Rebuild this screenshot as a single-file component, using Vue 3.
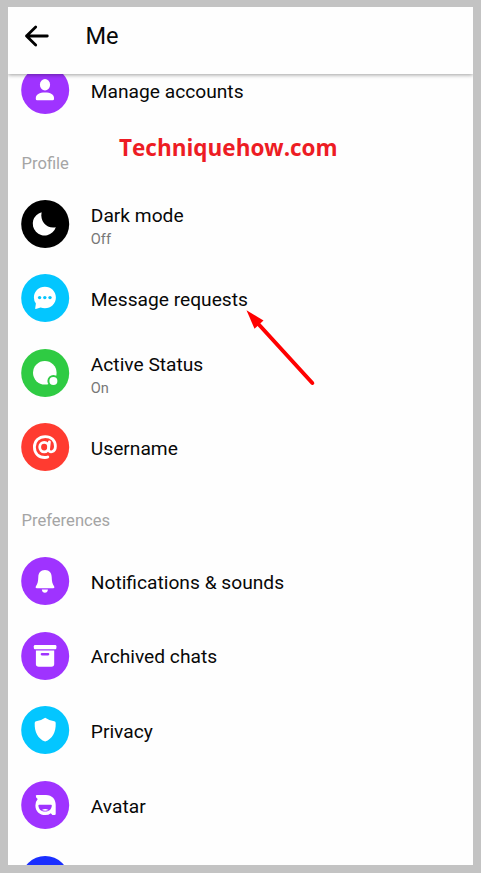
<script setup>
const sections = [
  { title: '', items: [{ label: 'Manage accounts', icon: 'person', tone: 'purple' }] },
  {
    title: 'Profile',
    items: [
      { label: 'Dark mode', sub: 'Off', icon: 'moon', tone: 'black' },
      { label: 'Message requests', icon: 'chat', tone: 'cyan' },
      { label: 'Active Status', sub: 'On', icon: 'active', tone: 'green' },
      { label: 'Username', icon: 'at', tone: 'red' },
    ],
  },
  {
    title: 'Preferences',
    items: [
      { label: 'Notifications & sounds', icon: 'bell', tone: 'purple' },
      { label: 'Archived chats', icon: 'archive', tone: 'purple' },
      { label: 'Privacy', icon: 'shield', tone: 'cyan' },
      { label: 'Avatar', icon: 'avatar', tone: 'purple' },
      { label: '', icon: 'none', tone: 'blue' },
    ],
  },
]
</script>

<template>
  <div class="frame">
    <main class="screen">
      <header class="bar">
        <svg class="back" viewBox="0 0 26 24" aria-label="Back">
          <path d="M23.3 12H2.5M11.7 3L2.5 12L11.7 21" />
        </svg>
        <h1>Me</h1>
      </header>
      <div class="list">
        <section v-for="section in sections" :key="section.title">
          <h2 v-if="section.title">{{ section.title }}</h2>
          <div v-for="item in section.items" :key="item.icon" class="row">
            <svg class="icon" :class="item.tone" viewBox="0 0 48 48">
              <circle class="disc" cx="24.2" cy="24" r="24" />
              <g v-if="item.icon === 'person'">
                <ellipse cx="24" cy="18.7" rx="5.1" ry="5.7" />
                <path d="M14.8 33V32.3C14.8 28.5 18.5 26.6 24 26.6S33 28.5 33 32.3V33Q33 34.3 31.7 34.3H16.1Q14.8 34.3 14.8 33Z" />
              </g>
              <path v-else-if="item.icon === 'moon'" d="M20.6 12.2A11.8 11.8 0 1 0 34.8 27.2C26.8 29.2 18.6 22 20.6 12.2Z" />
              <g v-else-if="item.icon === 'chat'">
                <path d="M23.9 12.7C30 12.7 34.9 17.4 34.9 23.5S30 34.2 23.9 34.2Q21.6 34.2 19.6 33.4L14.8 35Q14 35.1 14.2 34.2L14.9 29.6Q12.9 27 12.9 23.5C12.9 17.4 17.8 12.7 23.9 12.7Z" />
                <g class="disc">
                  <circle cx="18.6" cy="23.6" r="1.7" />
                  <circle cx="23.8" cy="23.6" r="1.7" />
                  <circle cx="29" cy="23.6" r="1.7" />
                </g>
              </g>
              <g v-else-if="item.icon === 'active'">
                <circle cx="23.8" cy="23.8" r="11.8" />
                <circle class="disc" cx="32.4" cy="32" r="6" />
                <circle cx="32.4" cy="32" r="4" />
              </g>
              <g v-else-if="item.icon === 'at'" class="stroked">
                <ellipse cx="23.2" cy="24.1" rx="4.5" ry="4.8" />
                <path d="M28.4 18.8L27.6 26.1C27.3 30.4 34.4 29.8 34.4 23.3C34.4 17.4 30.3 13.6 24.3 13.6C17.8 13.6 13.4 18 13.4 24.1C13.4 30.5 17.7 34.5 23.8 34.5Q25.8 34.5 26.8 34" />
              </g>
              <g v-else-if="item.icon === 'bell'">
                <path d="M24 13C28.5 13 30.6 16 30.7 20C30.8 24.5 31.4 27 33.2 29.5Q34 31.2 32.3 31.2H15.7Q14 31.2 14.8 29.5C16.6 27 17.2 24.5 17.3 20C17.4 16 19.5 13 24 13Z" />
                <path d="M20.8 32.5H26.9Q26.5 35.7 23.9 35.7T20.8 32.5Z" />
              </g>
              <g v-else-if="item.icon === 'archive'">
                <rect x="12.8" y="13" width="22.6" height="4.2" rx="1.2" />
                <path d="M14.9 18.4H33.2V32Q33.2 34.8 30.4 34.8H17.7Q14.9 34.8 14.9 32Z" />
                <rect class="disc" x="19.7" y="21" width="8.6" height="2.4" rx="1.1" />
              </g>
              <path v-else-if="item.icon === 'shield'" d="M24.2 11.8Q28.4 14.8 33.2 15.2Q34.7 15.3 34.7 16.9C35 26.5 31.4 32.6 24.2 35.6C17 32.6 13.4 26.5 13.7 16.9Q13.7 15.3 15.2 15.2Q20 14.8 24.2 11.8Z" />
              <g v-else-if="item.icon === 'avatar'">
                <path d="M14.8 14.5Q15.2 13.9 16.2 14L25 14C31 14.1 34.7 18.2 34.7 24V33Q34.7 34.1 33.5 34.1H31.4L29.8 32.2Q27.6 34.1 24.4 34.1C18.4 34.1 14.4 30.2 14.4 24.5Q14.4 20.7 16.7 18Q14.6 16.7 14.8 14.5Z" />
                <path class="disc" d="M18.2 23.8H30Q31 23.8 30.8 24.9C30.2 28.5 27.6 30.6 24.1 30.6S18 28.5 17.4 24.9Q17.2 23.8 18.2 23.8Z" />
                <path d="M20.8 28.9Q24.2 27.1 27.6 28.9Q24.2 30.4 20.8 28.9Z" />
              </g>
            </svg>
            <div v-if="item.label" class="text" :class="{ double: item.sub }">
              <span class="label">{{ item.label }}</span>
              <span v-if="item.sub" class="sub">{{ item.sub }}</span>
            </div>
          </div>
        </section>
      </div>
    </main>
    <span class="watermark">Techniquehow.com</span>
    <svg class="pointer" viewBox="0 0 72 80">
      <path d="M11 12.5L66.3 73" />
      <polygon points="0.5,0.3 17.5,10.5 8.5,18.7" />
    </svg>
  </div>
</template>

<style>
body {
  margin: 0;
}
</style>

<style scoped>
.frame {
  position: relative;
  box-sizing: border-box;
  width: 481px;
  height: 873px;
  padding: 7px 8px 8px;
  background: #c3c3c3;
  font-family: Roboto, 'Liberation Sans', sans-serif;
  color: #080808;
}
.screen {
  display: flex;
  flex-direction: column;
  height: 858px;
  overflow: hidden;
  background: #fefefe;
}
.bar {
  position: relative;
  z-index: 1;
  display: flex;
  flex: none;
  align-items: center;
  gap: 35.5px;
  box-sizing: border-box;
  height: 66.5px;
  padding: 0 0 8.5px 16px;
  background: #fefefe;
  box-shadow: 0 1px 4px rgba(0, 0, 0, 0.38);
}
.back {
  width: 26px;
  height: 24px;
  fill: none;
  stroke: #000;
  stroke-width: 2.8;
  stroke-linecap: round;
  stroke-linejoin: round;
}
h1 {
  margin: 0;
  font-size: 23.6px;
  font-weight: 400;
  line-height: 28px;
}
.list {
  flex: none;
  margin-top: -20.8px;
}
h2 {
  box-sizing: border-box;
  height: 58.9px;
  margin: 0;
  padding: 26.4px 0 0 13.5px;
  font-size: 16.6px;
  font-weight: 400;
  line-height: 20px;
  color: #a5a5a5;
}
.row {
  display: flex;
  align-items: center;
  gap: 21.5px;
  height: 74.65px;
  padding-left: 13.3px;
}
.icon {
  flex: none;
  overflow: visible;
  width: 48px;
  height: 48px;
  fill: #fff;
}
.stroked {
  fill: none;
  stroke: #fff;
  stroke-width: 2.8;
  stroke-linecap: round;
}
.purple .disc { fill: #9f33ff; }
.black .disc { fill: #000; }
.cyan .disc { fill: #03c6ff; }
.green .disc { fill: #2fcb43; }
.red .disc { fill: #ff3b30; }
.blue .disc { fill: #1a2fff; }
.text {
  display: flex;
  flex-direction: column;
  padding-top: 3.4px;
}
.double {
  padding-top: 6px;
}
.label {
  font-size: 19.2px;
  line-height: 24px;
  white-space: nowrap;
}
.sub {
  font-size: 14.6px;
  line-height: 22px;
  color: #777;
}
.watermark {
  position: absolute;
  left: 119px;
  top: 133px;
  font: 700 22.5px/30px 'Open Sans', 'Noto Sans', sans-serif;
  color: #ed1c24;
}
.pointer {
  position: absolute;
  left: 246px;
  top: 310px;
  width: 72px;
  height: 80px;
  fill: #f00;
}
.pointer path {
  stroke: #f00;
  stroke-width: 4;
  stroke-linecap: round;
}
</style>
